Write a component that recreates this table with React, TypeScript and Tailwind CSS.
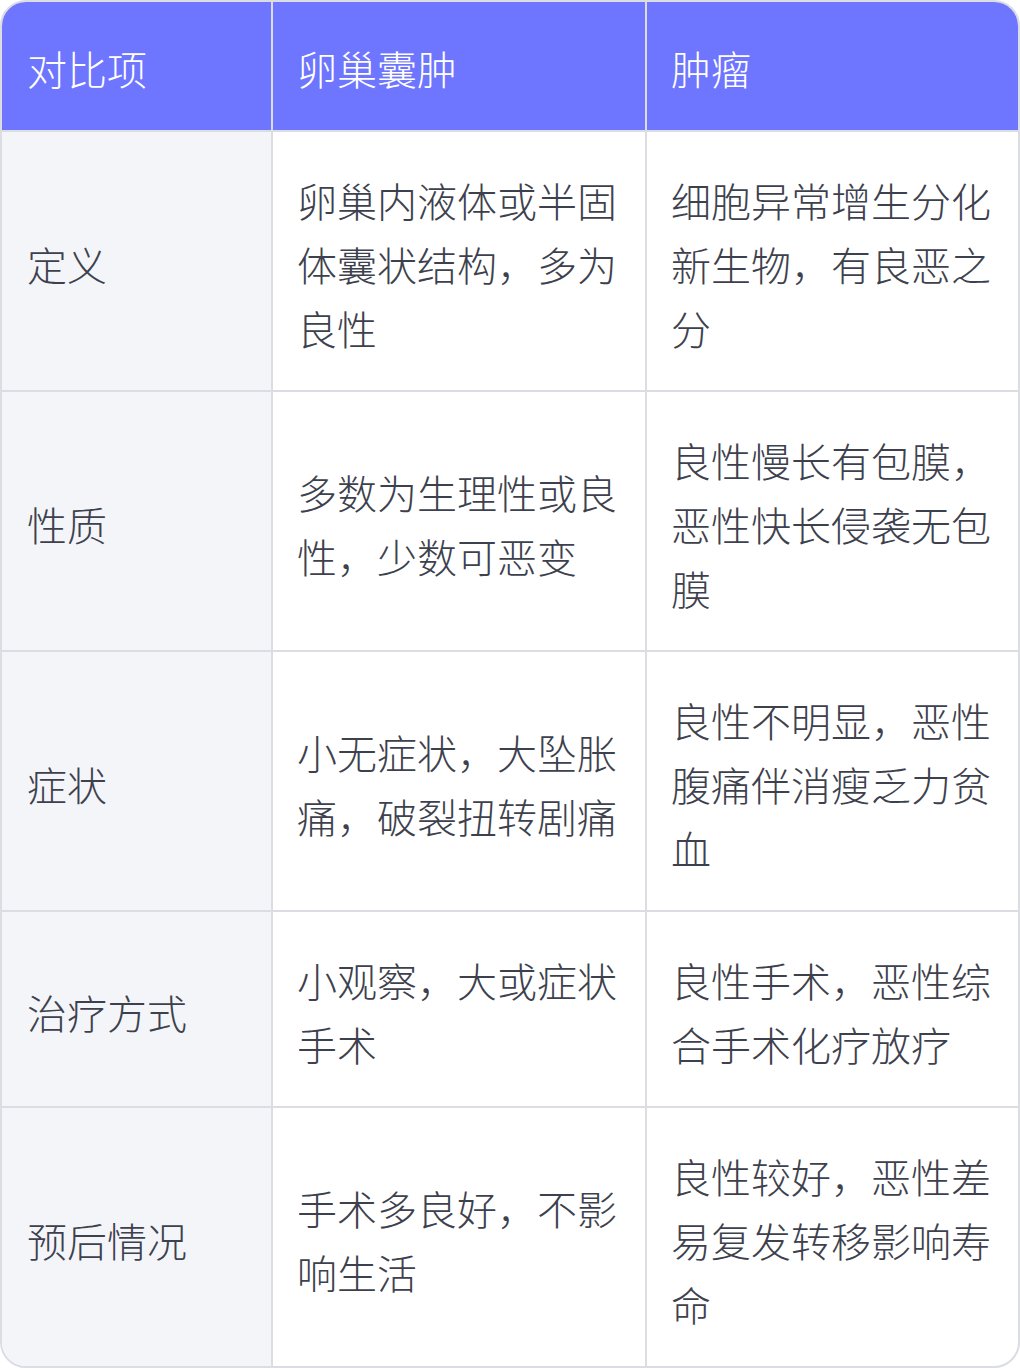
const rows = [
  {
    label: "定义",
    a: "卵巢内液体或半固体囊状结构，多为良性",
    b: "细胞异常增生分化新生物，有良恶之分",
  },
  {
    label: "性质",
    a: "多数为生理性或良性，少数可恶变",
    b: "良性慢长有包膜，恶性快长侵袭无包膜",
  },
  {
    label: "症状",
    a: "小无症状，大坠胀痛，破裂扭转剧痛",
    b: "良性不明显，恶性腹痛伴消瘦乏力贫血",
  },
  {
    label: "治疗方式",
    a: "小观察，大或症状手术",
    b: "良性手术，恶性综合手术化疗放疗",
  },
  {
    label: "预后情况",
    a: "手术多良好，不影响生活",
    b: "良性较好，恶性差易复发转移影响寿命",
  },
];

const font = { fontFamily: '"Noto Sans CJK SC", "Noto Sans", sans-serif' };

export default function App() {
  return (
    <div className="w-[1020px] bg-white" style={font}>
      <div className="border-2 border-[#dcdde3] rounded-[26px] overflow-hidden">
        <div className="grid grid-cols-[269px_374px_1fr] bg-[#6e75fe] text-white text-[40px] leading-[64px] font-light">
          <div className="px-[25px] pt-[34px] pb-[30px]">对比项</div>
          <div className="border-l-2 border-[#dcdde3] px-[24px] pt-[34px] pb-[30px]">卵巢囊肿</div>
          <div className="border-l-2 border-[#dcdde3] px-[24px] pt-[34px] pb-[30px]">肿瘤</div>
        </div>
        {rows.map((r) => (
          <div
            key={r.label}
            className="grid grid-cols-[269px_374px_1fr] border-t-2 border-[#dcdde3] text-[40px] leading-[64px] text-[#3d414d] font-light"
          >
            <div className="bg-[#f4f5f9] px-[25px] pt-[36px] pb-[30px] flex items-center">{r.label}</div>
            <div className="border-l-2 border-[#dcdde3] px-[24px] pt-[36px] pb-[30px] flex items-center">{r.a}</div>
            <div className="border-l-2 border-[#dcdde3] px-[24px] pt-[36px] pb-[30px] flex items-center">{r.b}</div>
          </div>
        ))}
      </div>
    </div>
  );
}
